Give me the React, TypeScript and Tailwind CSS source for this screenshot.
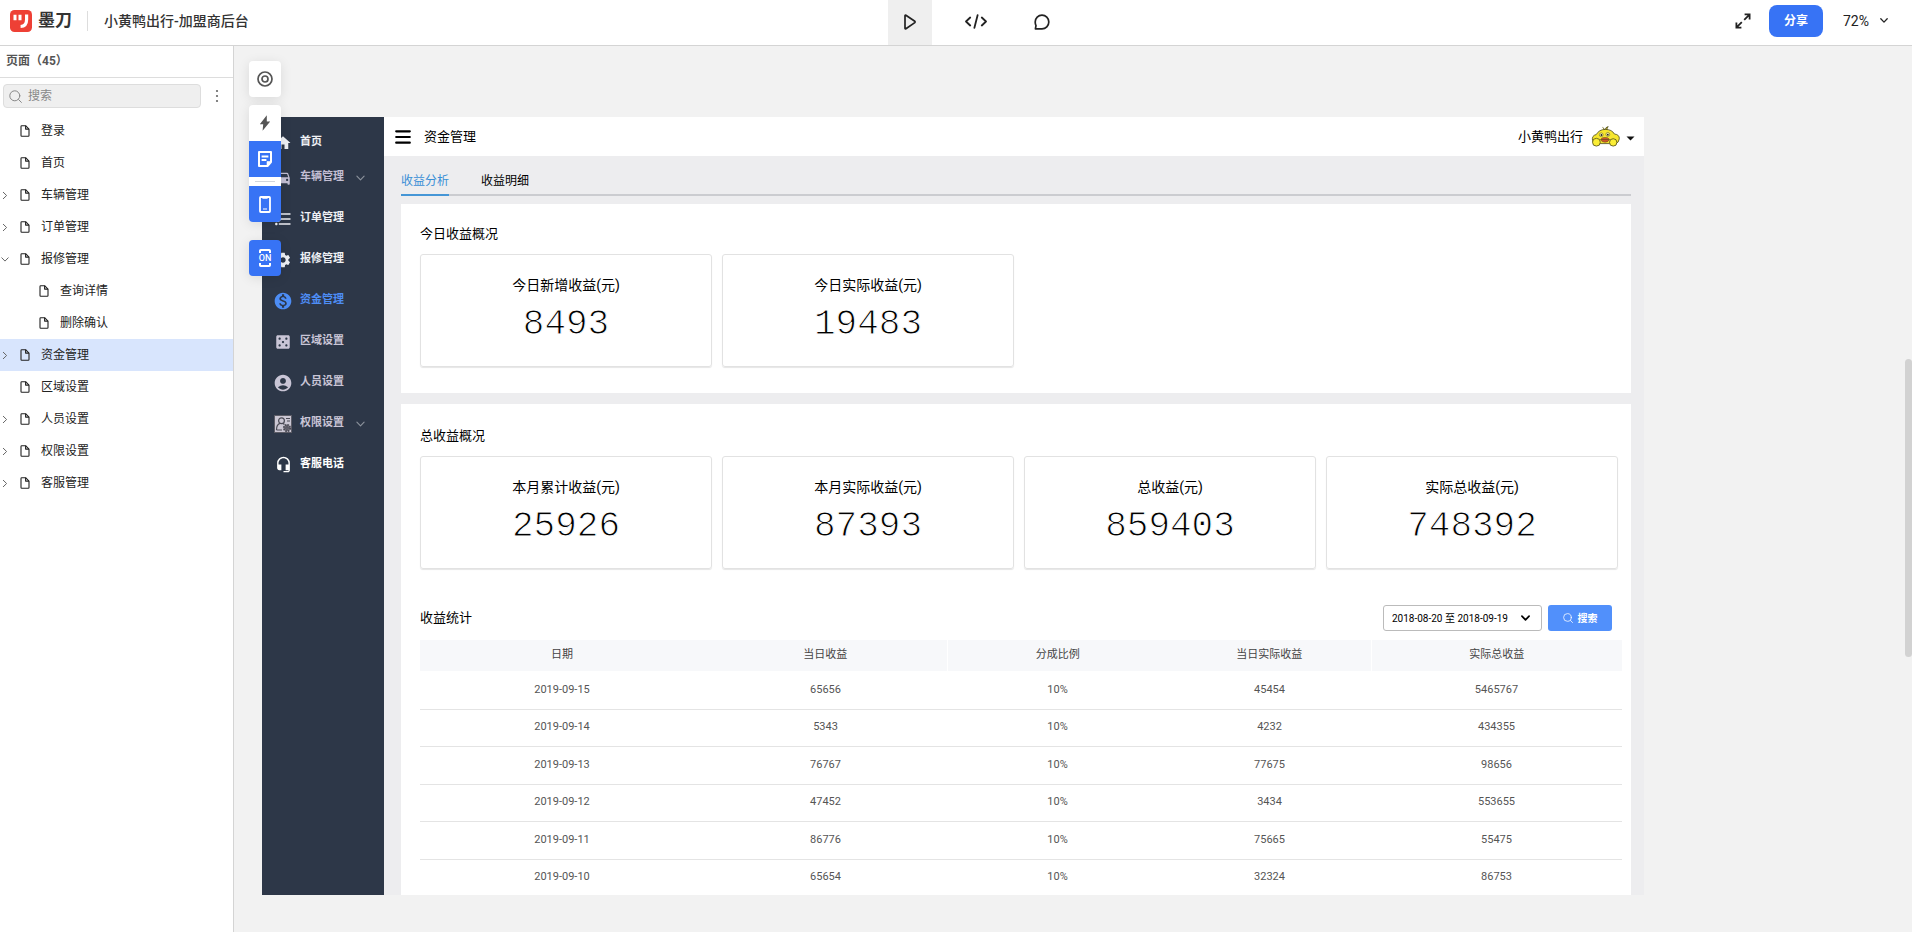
import { ReactNode, useState } from "react";
import clsx from "clsx";
import { MdAccountCircle, MdCasino, MdDirectionsCar, MdFormatListBulleted, MdHeadsetMic, MdHome, MdMonetizationOn, MdSettings } from "react-icons/md";

type PageNode = { name: string; arrow?: "right" | "down"; child?: boolean };
type MenuItem = { name: string; icon: ReactNode; tone: string; more?: boolean };

const pages: PageNode[] = [
  { name: "登录" },
  { name: "首页" },
  { name: "车辆管理", arrow: "right" },
  { name: "订单管理", arrow: "right" },
  { name: "报修管理", arrow: "down" },
  { name: "查询详情", child: true },
  { name: "删除确认", child: true },
  { name: "资金管理", arrow: "right" },
  { name: "区域设置" },
  { name: "人员设置", arrow: "right" },
  { name: "权限设置", arrow: "right" },
  { name: "客服管理", arrow: "right" },
];

const topMenu: MenuItem[] = [
  { name: "首页", icon: <MdHome size={18} />, tone: "text-[#eef0f4]" },
  { name: "车辆管理", icon: <MdDirectionsCar size={18} />, tone: "text-[#c3bfd3]", more: true },
];

const menu: MenuItem[] = [
  { name: "订单管理", icon: <MdFormatListBulleted size={20} />, tone: "text-[#eef0f4]" },
  { name: "报修管理", icon: <MdSettings size={18} />, tone: "text-[#eef0f4]" },
  { name: "资金管理", icon: <MdMonetizationOn size={20} />, tone: "text-[#4d8df5]" },
  { name: "区域设置", icon: <MdCasino size={18} />, tone: "text-[#c9c5d6]" },
  { name: "人员设置", icon: <MdAccountCircle size={20} />, tone: "text-[#c9c5d6]" },
  { name: "权限设置", icon: <RoleIcon />, tone: "text-[#c9c5d6]", more: true },
  { name: "客服电话", icon: <MdHeadsetMic size={17} />, tone: "text-white" },
];

const today = [
  { label: "今日新增收益(元)", value: "8493" },
  { label: "今日实际收益(元)", value: "19483" },
];

const total = [
  { label: "本月累计收益(元)", value: "25926" },
  { label: "本月实际收益(元)", value: "87393" },
  { label: "总收益(元)", value: "859403" },
  { label: "实际总收益(元)", value: "748392" },
];

const columns = [
  { title: "日期", width: "w-[284px]" },
  { title: "当日收益", width: "w-[243px] border-r border-white" },
  { title: "分成比例", width: "w-[221px]" },
  { title: "当日实际收益", width: "w-[203px] border-r border-white" },
  { title: "实际总收益", width: "w-[251px]" },
];

const rows = [
  ["2019-09-15", "65656", "10%", "45454", "5465767"],
  ["2019-09-14", "5343", "10%", "4232", "434355"],
  ["2019-09-13", "76767", "10%", "77675", "98656"],
  ["2019-09-12", "47452", "10%", "3434", "553655"],
  ["2019-09-11", "86776", "10%", "75665", "55475"],
  ["2019-09-10", "65654", "10%", "32324", "86753"],
];

function Chevron({ className }: { className?: string }) {
  return (
    <svg viewBox="0 0 8 5" fill="none" stroke="currentColor" strokeLinecap="round" strokeLinejoin="round" className={className}>
      <path d="M.8.8 4 4.1 7.2.8" />
    </svg>
  );
}

function FileIcon() {
  return (
    <svg width="10" height="12" viewBox="0 0 10 12" fill="none" stroke="#222" strokeWidth="1.1" strokeLinejoin="round">
      <path d="M1 1.4Q1 .7 1.7.7H5.6L9 4.1V10.6Q9 11.3 8.3 11.3H1.7Q1 11.3 1 10.6Z" />
      <path d="M5.6.7V4.1H9" />
    </svg>
  );
}

function SearchIcon({ size }: { size: number }) {
  return (
    <svg width={size} height={size} viewBox="0 0 13 13" fill="none" stroke="currentColor" strokeLinecap="round">
      <circle cx="5.8" cy="5.8" r="5" />
      <path d="m9.6 9.6 2.8 2.8" />
    </svg>
  );
}

function RoleIcon() {
  return (
    <svg width="18" height="18" viewBox="0 0 18 18" fill="none" stroke="#4a4a55" strokeWidth="1.2">
      <rect x=".5" y=".5" width="17" height="17" fill="#cbc7d4" stroke="#5c5c66" strokeWidth="1" />
      <circle cx="7.5" cy="5.8" r="2.9" />
      <path d="M2.5 15q0-5.5 3.4-6.6M9 8.6l1.4 1M2.5 15H8M12 3.5h4M13 6h3" />
      <circle cx="13" cy="13" r="3.2" fill="#77747f" strokeWidth="1.8" strokeDasharray="1.6 .9" />
      <circle cx="13" cy="13" r="1.1" fill="#cbc7d4" />
    </svg>
  );
}

function Duck() {
  return (
    <svg width="29" height="21" viewBox="0 0 29 21" stroke="#4d4a1c" strokeWidth=".8" strokeLinejoin="round">
      <path d="M13.5 4Q13 1.8 11.5 1.4M14 4Q14.6 1 17.2.6Q15.8 2 16 4" fill="#d8c52a" />
      <path d="M1.5 14.5Q.6 9.5 5.2 8.6Q8.2 3.4 14.3 3.4Q21 3.4 23.4 8Q28.6 8.6 28.3 12.8Q28 16.6 24.6 17.6H4.5Q2 17 1.5 14.5Z" fill="#f6e62e" />
      <circle cx="10.2" cy="8.8" r="1.9" fill="#fff6a8" strokeWidth=".5" />
      <circle cx="16.8" cy="8.4" r="1.9" fill="#fff6a8" strokeWidth=".5" />
      <circle cx="10.4" cy="9" r=".9" fill="#222" stroke="none" />
      <circle cx="16.8" cy="8.7" r=".9" fill="#222" stroke="none" />
      <path d="M9.4 13.6Q11.4 11 14 11.6Q16.8 11 18.6 13.4Q17 16.4 14 16.2Q10.8 16.4 9.4 13.6Z" fill="#d9572b" strokeWidth=".5" />
      <path d="M9.8 13.6H18.2" strokeWidth=".7" />
      <circle cx="5.4" cy="16.2" r="3.9" fill="#fbee35" />
      <circle cx="22.2" cy="16.4" r="3.7" fill="#fbee35" />
    </svg>
  );
}

function Toolbar() {
  return (
    <div className="absolute left-[15px] top-[15px] z-10 flex w-8 flex-col">
      <button aria-label="定位" className="flex h-9 items-center justify-center rounded-sm bg-white shadow-[0_2px_12px_rgba(0,0,0,0.1)]">
        <svg width="16" height="16" viewBox="0 0 16 16" fill="none" stroke="#555" strokeWidth="1.7">
          <circle cx="8" cy="8" r="7" />
          <circle cx="8" cy="8" r="3" />
        </svg>
      </button>
      <div className="mt-2 flex flex-col overflow-hidden rounded-sm bg-white shadow-[0_2px_12px_rgba(0,0,0,0.1)]">
        <button aria-label="交互" className="flex h-9 items-center justify-center">
          <svg width="12" height="16" viewBox="0 0 12 16" fill="#555">
            <path d="M7.8.3.8 9.2H4.2L3.6 15.8 11.2 6.4H7.8Z" />
          </svg>
        </button>
        <button aria-label="批注" className="flex h-9 items-center justify-center bg-[#3773f5]">
          <svg width="16" height="18" viewBox="0 0 16 18" fill="none" stroke="#fff" strokeWidth="2">
            <path d="M2 2H14V12L10.5 16H2Z" strokeLinejoin="round" />
            <path d="M4.6 6.5H11.4M4.6 10H9.4" strokeWidth="1.8" />
            <path d="M14 11.5H10V16Z" fill="#fff" strokeWidth=".6" />
          </svg>
        </button>
        <div className="flex h-[9px] items-center px-1.5">
          <hr className="w-full border-gray-300" />
        </div>
        <button aria-label="设备" className="flex h-9 items-center justify-center bg-[#3773f5]">
          <svg width="12" height="17" viewBox="0 0 12 17" fill="none" stroke="#fff" strokeWidth="1.8">
            <rect x="1" y="1" width="10" height="15" rx=".8" />
            <path d="M3.4 2.2H8.6M4 13H8" strokeWidth="1.2" />
          </svg>
        </button>
      </div>
      <button aria-label="开关" className="mt-[18px] flex h-9 flex-col items-center justify-center rounded-sm bg-[#3773f5] font-[Roboto,sans-serif] text-[9px] font-medium leading-[10px] text-white shadow-[0_2px_12px_rgba(0,0,0,0.1)]">
        <svg width="12" height="4" viewBox="0 0 12 4" fill="none" stroke="#fff" strokeWidth="2">
          <path d="M1 4V1.8Q1 1 1.8 1H10.2Q11 1 11 1.8V4" />
        </svg>
        ON
        <svg width="12" height="4" viewBox="0 0 12 4" fill="none" stroke="#fff" strokeWidth="2">
          <path d="M1 0V2.2Q1 3 1.8 3H10.2Q11 3 11 2.2V0" />
        </svg>
      </button>
    </div>
  );
}

function MenuLink({ item, height }: { item: MenuItem; height: string }) {
  return (
    <a href="#" className={clsx("flex items-center pl-[11px] text-[11px] font-bold", height, item.tone)}>
      <span className="flex w-5 justify-center">{item.icon}</span>
      <span className="ml-[7px]">{item.name}</span>
      {item.more && <Chevron className="ml-3 h-[6px] w-[9px] text-[#8c929c]" />}
    </a>
  );
}

function StatCard({ label, value }: { label: string; value: string }) {
  return (
    <div className="flex h-[113px] flex-col items-center rounded-[3px] border border-[#e2e2e2] pt-[18px] text-black shadow-[0_1px_1px_rgba(0,0,0,0.1)]">
      <div className="text-sm leading-6">{label}</div>
      {/* white outline thins the digits */}
      <div className="mt-2 font-['Liberation_Mono',monospace] text-4xl leading-10 [-webkit-text-stroke:1px_white]">{value}</div>
    </div>
  );
}

function Prototype() {
  const [tab, setTab] = useState("收益分析");
  return (
    <div className="flex min-h-0 flex-1 overflow-hidden">
      <aside className="w-[122px] shrink-0 bg-[#2d3748] pt-2">
        {topMenu.map((m) => <MenuLink key={m.name} item={m} height="h-[35px]" />)}
        <div className="pt-[3px]">
          {menu.map((m) => <MenuLink key={m.name} item={m} height="h-[41px]" />)}
        </div>
      </aside>
      <div className="flex min-w-0 flex-1 flex-col overflow-hidden bg-[#ededef]">
        <div className="flex h-[39px] shrink-0 items-center bg-white pl-[11px] pr-[9px] text-[13px] text-black">
          <button aria-label="菜单">
            <svg width="16" height="14" viewBox="0 0 16 14" stroke="#000" strokeWidth="2.2" strokeLinecap="round">
              <path d="M1.2 1.3H14.8M1.2 7H14.8M1.2 12.7H14.8" />
            </svg>
          </button>
          <h1 className="ml-[13px]">资金管理</h1>
          <button className="ml-auto flex items-center">
            小黄鸭出行
            <span className="ml-2"><Duck /></span>
            <svg width="9" height="5" viewBox="0 0 9 5" className="ml-1.5 mt-1">
              <path d="M.5.5H8.5L4.5 4.6Z" fill="#111" />
            </svg>
          </button>
        </div>
        <div className="pl-[17px] pr-[13px] pt-3">
          <div className="flex gap-8 border-b-2 border-[#cbccd0] text-xs">
            {["收益分析", "收益明细"].map((t) => (
              <button
                key={t}
                onClick={() => setTab(t)}
                className={clsx("-mb-0.5 h-7 border-b-2", tab === t ? "border-[#4596d6] text-[#3a8fd6]" : "border-transparent text-black")}
              >
                {t}
              </button>
            ))}
          </div>
          <section className="mt-2 bg-white pb-[26px] pl-[19px] pr-[13px] pt-[18px]">
            <h2 className="text-[13px] leading-6 text-black">今日收益概况</h2>
            <div className="mt-2 grid grid-cols-4 gap-2.5">
              {today.map((s) => <StatCard key={s.label} {...s} />)}
            </div>
          </section>
          <section className="mt-[11px] bg-white pl-[19px] pr-2.5 pt-5">
            <h2 className="text-[13px] leading-6 text-black">总收益概况</h2>
            <div className="mr-[3px] mt-2 grid grid-cols-4 gap-2.5">
              {total.map((s) => <StatCard key={s.label} {...s} />)}
            </div>
            <div className="mt-9 flex items-center pr-[9px]">
              <h2 className="text-[13px] text-black">收益统计</h2>
              <div className="relative ml-auto flex">
                <select aria-label="日期范围" className="h-[26px] w-[159px] appearance-none rounded-[3px] border border-[#bbb] bg-white pl-2 text-[10px] text-black">
                  <option>2018-08-20 至 2018-09-19</option>
                </select>
                <Chevron className="pointer-events-none absolute right-3 top-[10px] h-[6px] w-[9px] stroke-[1.5] text-black" />
              </div>
              <button className="ml-1.5 flex h-[26px] w-16 items-center justify-center gap-[5px] rounded-[3px] bg-[#5190fb] text-[10px] font-bold text-white">
                <SearchIcon size={10} />
                搜索
              </button>
            </div>
            <table className="mt-[9px] w-full table-fixed text-center text-[11px]">
              <thead>
                <tr className="h-[31px] bg-[#f7f8fa] text-[#444]">
                  {columns.map((c) => <th key={c.title} className={clsx("font-normal", c.width)}>{c.title}</th>)}
                </tr>
              </thead>
              <tbody className="text-[#555]">
                {rows.map((r) => (
                  <tr key={r[0]} className="h-[37px] border-b border-[#e4e4e4] odd:h-[38px]">
                    {r.map((cell, i) => <td key={i}>{cell}</td>)}
                  </tr>
                ))}
              </tbody>
            </table>
          </section>
        </div>
      </div>
    </div>
  );
}

export default function App() {
  const [current, setCurrent] = useState("资金管理");
  return (
    <div className="flex h-screen flex-col bg-white font-[Roboto,'Noto_Sans_CJK_SC',sans-serif] text-[#222]">
      <header className="flex h-[46px] shrink-0 border-b border-[#d4d4d4]">
        <div className="flex flex-1 items-center pb-[3px] pl-2.5">
          <svg width="22" height="22" viewBox="0 0 22 22" fill="none" stroke="#fff" strokeWidth="3">
            <rect width="22" height="22" rx="4.5" fill="#ee4035" stroke="none" />
            <path d="M5 4.8V10.2M10 4.8V10.2" />
            <path d="M16.6 4.5V9.5Q16.6 16.3 10.6 16.5" strokeWidth="3.2" />
          </svg>
          <span className="ml-1.5 text-[17px] font-bold text-[#333]">墨刀</span>
          <span className="ml-[15px] h-5 w-px bg-[#ddd]" />
          <span className="ml-4 text-sm font-medium text-[#333]">小黄鸭出行-加盟商后台</span>
        </div>
        <nav className="flex gap-[22px] pl-[53px]">
          <button aria-label="预览" className="flex w-11 items-center justify-center bg-[#efefef] pb-0.5">
            <svg width="12" height="16" viewBox="0 0 12 16" fill="none" stroke="#222" strokeWidth="1.7" strokeLinejoin="round">
              <path d="M1 1.7Q1 .8 1.9 1.2L10.8 7.3Q11.3 8 10.8 8.6L1.9 14.8Q1 15.2 1 14.3Z" />
            </svg>
          </button>
          <button aria-label="代码" className="flex w-11 items-center justify-center pb-0.5">
            <svg width="22" height="15" viewBox="0 0 22 15" fill="none" stroke="#222" strokeWidth="1.8" strokeLinecap="round" strokeLinejoin="round">
              <path d="M5.2 3.5 1 7.5l4.2 4M16.8 3.5 21 7.5l-4.2 4M12.6 1.2 9.4 13.8" />
            </svg>
          </button>
          <button aria-label="评论" className="flex w-11 items-center justify-center pb-0.5">
            <svg width="16" height="16" viewBox="0 0 16 16" fill="none" stroke="#222" strokeWidth="1.7" strokeLinejoin="round">
              <path d="M8 1.2A6.8 6.8 0 1 1 8 14.8H1.4L2 11.6Q1.2 10.2 1.2 8A6.8 6.8 0 0 1 8 1.2Z" />
            </svg>
          </button>
        </nav>
        <div className="flex flex-1 items-center justify-end pb-[3px] pr-6">
          <button aria-label="全屏">
            <svg width="16" height="16" viewBox="0 0 16 16" fill="none" stroke="#222" strokeWidth="1.8">
              <path d="M9.6 1.4H14.6V6.4M14.2 1.8 9.2 6.8M6.4 14.6H1.4V9.6M1.8 14.2 6.8 9.2" />
            </svg>
          </button>
          <button className="ml-[18px] h-8 w-[54px] rounded-lg bg-[#3773f5] text-xs font-bold text-white">分享</button>
          <div className="relative ml-5">
            <select aria-label="缩放" className="w-[45px] appearance-none text-sm">
              <option>72%</option>
            </select>
            <Chevron className="pointer-events-none absolute right-0 top-[9px] h-[5px] w-2 stroke-[1.3]" />
          </div>
        </div>
      </header>
      <div className="flex min-h-0 flex-1">
        <aside className="w-[234px] shrink-0 border-r border-[#d4d4d4]">
          <h2 className="flex h-8 items-center border-b border-[#ddd] pb-0.5 pl-1.5 text-xs font-bold text-[#555]">页面（45）</h2>
          <div className="flex items-center pl-[3px] pt-1.5">
            <label className="flex h-6 w-[198px] items-center rounded-sm border border-[#ddd] bg-[#efefef] pl-[5px] text-[#888]">
              <SearchIcon size={13} />
              <input aria-label="搜索" placeholder="搜索" className="ml-1.5 w-40 bg-transparent text-xs outline-none placeholder:text-[#888]" />
            </label>
            <button aria-label="更多" className="ml-[14px]">
              <svg width="4" height="14" viewBox="0 0 4 14" fill="#666">
                <circle cx="2" cy="2" r="1.1" />
                <circle cx="2" cy="7" r="1.1" />
                <circle cx="2" cy="12" r="1.1" />
              </svg>
            </button>
          </div>
          <ul className="pt-[7px] text-xs">
            {pages.map((p) => (
              <li key={p.name}>
                <button
                  onClick={() => setCurrent(p.name)}
                  className={clsx("flex h-8 w-full items-center", p.child ? "pl-[19px]" : "pl-0", current === p.name && "bg-[#d8e5fd]")}
                >
                  <span className="flex w-5 pl-px text-[#666]">
                    {p.arrow && <Chevron className={clsx("h-[5px] w-2", p.arrow === "right" && "-rotate-90")} />}
                  </span>
                  <FileIcon />
                  <span className="ml-[11px]">{p.name}</span>
                </button>
              </li>
            ))}
          </ul>
        </aside>
        <main className="relative flex min-w-0 flex-1 flex-col bg-[#f2f2f2] pb-[37px] pl-7 pr-[268px] pt-[71px]">
          <Toolbar />
          <Prototype />
          <div className="absolute right-0 top-[313px] h-[298px] w-[7px] rounded-full bg-[#d2d2d2]" />
        </main>
      </div>
    </div>
  );
}
